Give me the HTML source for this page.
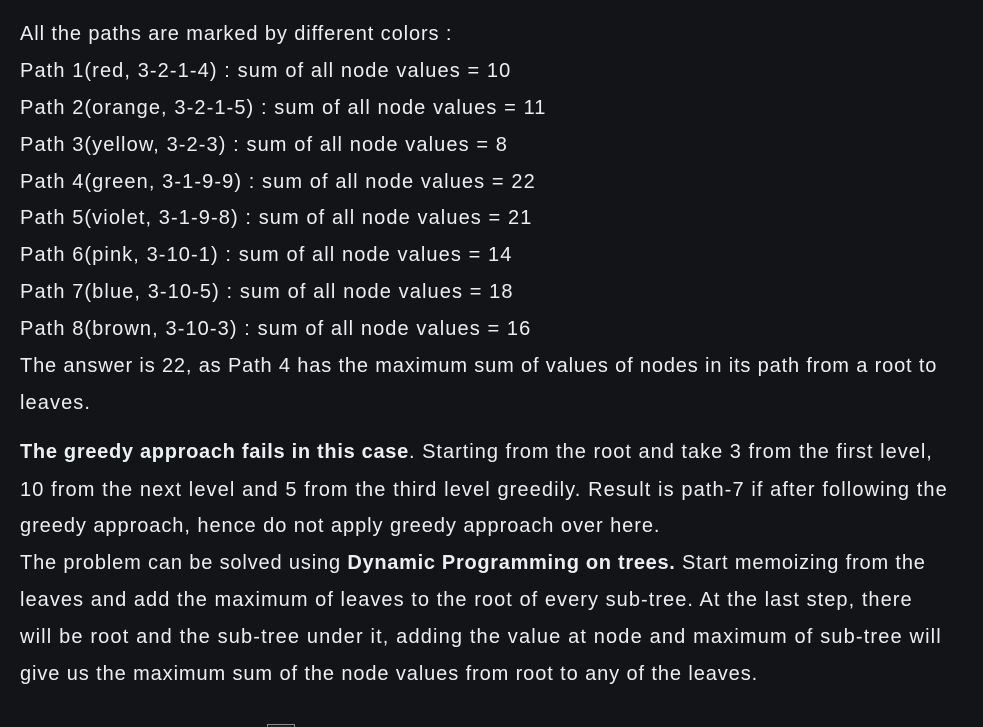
<!DOCTYPE html>
<html><head><meta charset="utf-8"><style>
html,body{margin:0;padding:0;background:#131417;width:983px;height:726px;overflow:hidden}
body{font-family:"Liberation Sans",sans-serif;color:#eceff1;font-size:20px;letter-spacing:1.1px}
.l{position:absolute;left:20px;white-space:nowrap;line-height:24px}
.p{letter-spacing:1.1px}
b{font-weight:bold;letter-spacing:0.7px}
</style></head><body>
<div class="l" style="top:22px;letter-spacing:0.9px">All the paths are marked by different colors :</div>
<div class="l p" style="top:59px">Path 1(red, 3-2-1-4) : sum of all node values = 10</div>
<div class="l p" style="top:96px">Path 2(orange, 3-2-1-5) : sum of all node values = 11</div>
<div class="l p" style="top:133px">Path 3(yellow, 3-2-3) : sum of all node values = 8</div>
<div class="l p" style="top:170px">Path 4(green, 3-1-9-9) : sum of all node values = 22</div>
<div class="l p" style="top:206px">Path 5(violet, 3-1-9-8) : sum of all node values = 21</div>
<div class="l p" style="top:243px">Path 6(pink, 3-10-1) : sum of all node values = 14</div>
<div class="l p" style="top:280px">Path 7(blue, 3-10-5) : sum of all node values = 18</div>
<div class="l p" style="top:317px">Path 8(brown, 3-10-3) : sum of all node values = 16</div>
<div class="l" style="top:354px;letter-spacing:0.85px">The answer is 22, as Path 4 has the maximum sum of values of nodes in its path from a root to</div>
<div class="l" style="top:391px">leaves.</div>
<div class="l" style="top:440px;letter-spacing:1.0px"><b>The greedy approach fails in this case</b>. Starting from the root and take 3 from the first level,</div>
<div class="l" style="top:478px;letter-spacing:1.1px">10 from the next level and 5 from the third level greedily. Result is path-7 if after following the</div>
<div class="l" style="top:514px;letter-spacing:0.95px">greedy approach, hence do not apply greedy approach over here.</div>
<div class="l" style="top:551px;letter-spacing:0.85px">The problem can be solved using <b>Dynamic Programming on trees.</b> Start memoizing from the</div>
<div class="l" style="top:588px;letter-spacing:1.05px">leaves and add the maximum of leaves to the root of every sub-tree. At the last step, there</div>
<div class="l" style="top:625px;letter-spacing:1.15px">will be root and the sub-tree under it, adding the value at node and maximum of sub-tree will</div>
<div class="l" style="top:662px;letter-spacing:0.9px">give us the maximum sum of the node values from root to any of the leaves.</div>
<div style="position:absolute;left:267px;top:724px;width:26px;height:2px;border:1px solid #888;border-bottom:none;background:#1e1f22"></div>
</body></html>
